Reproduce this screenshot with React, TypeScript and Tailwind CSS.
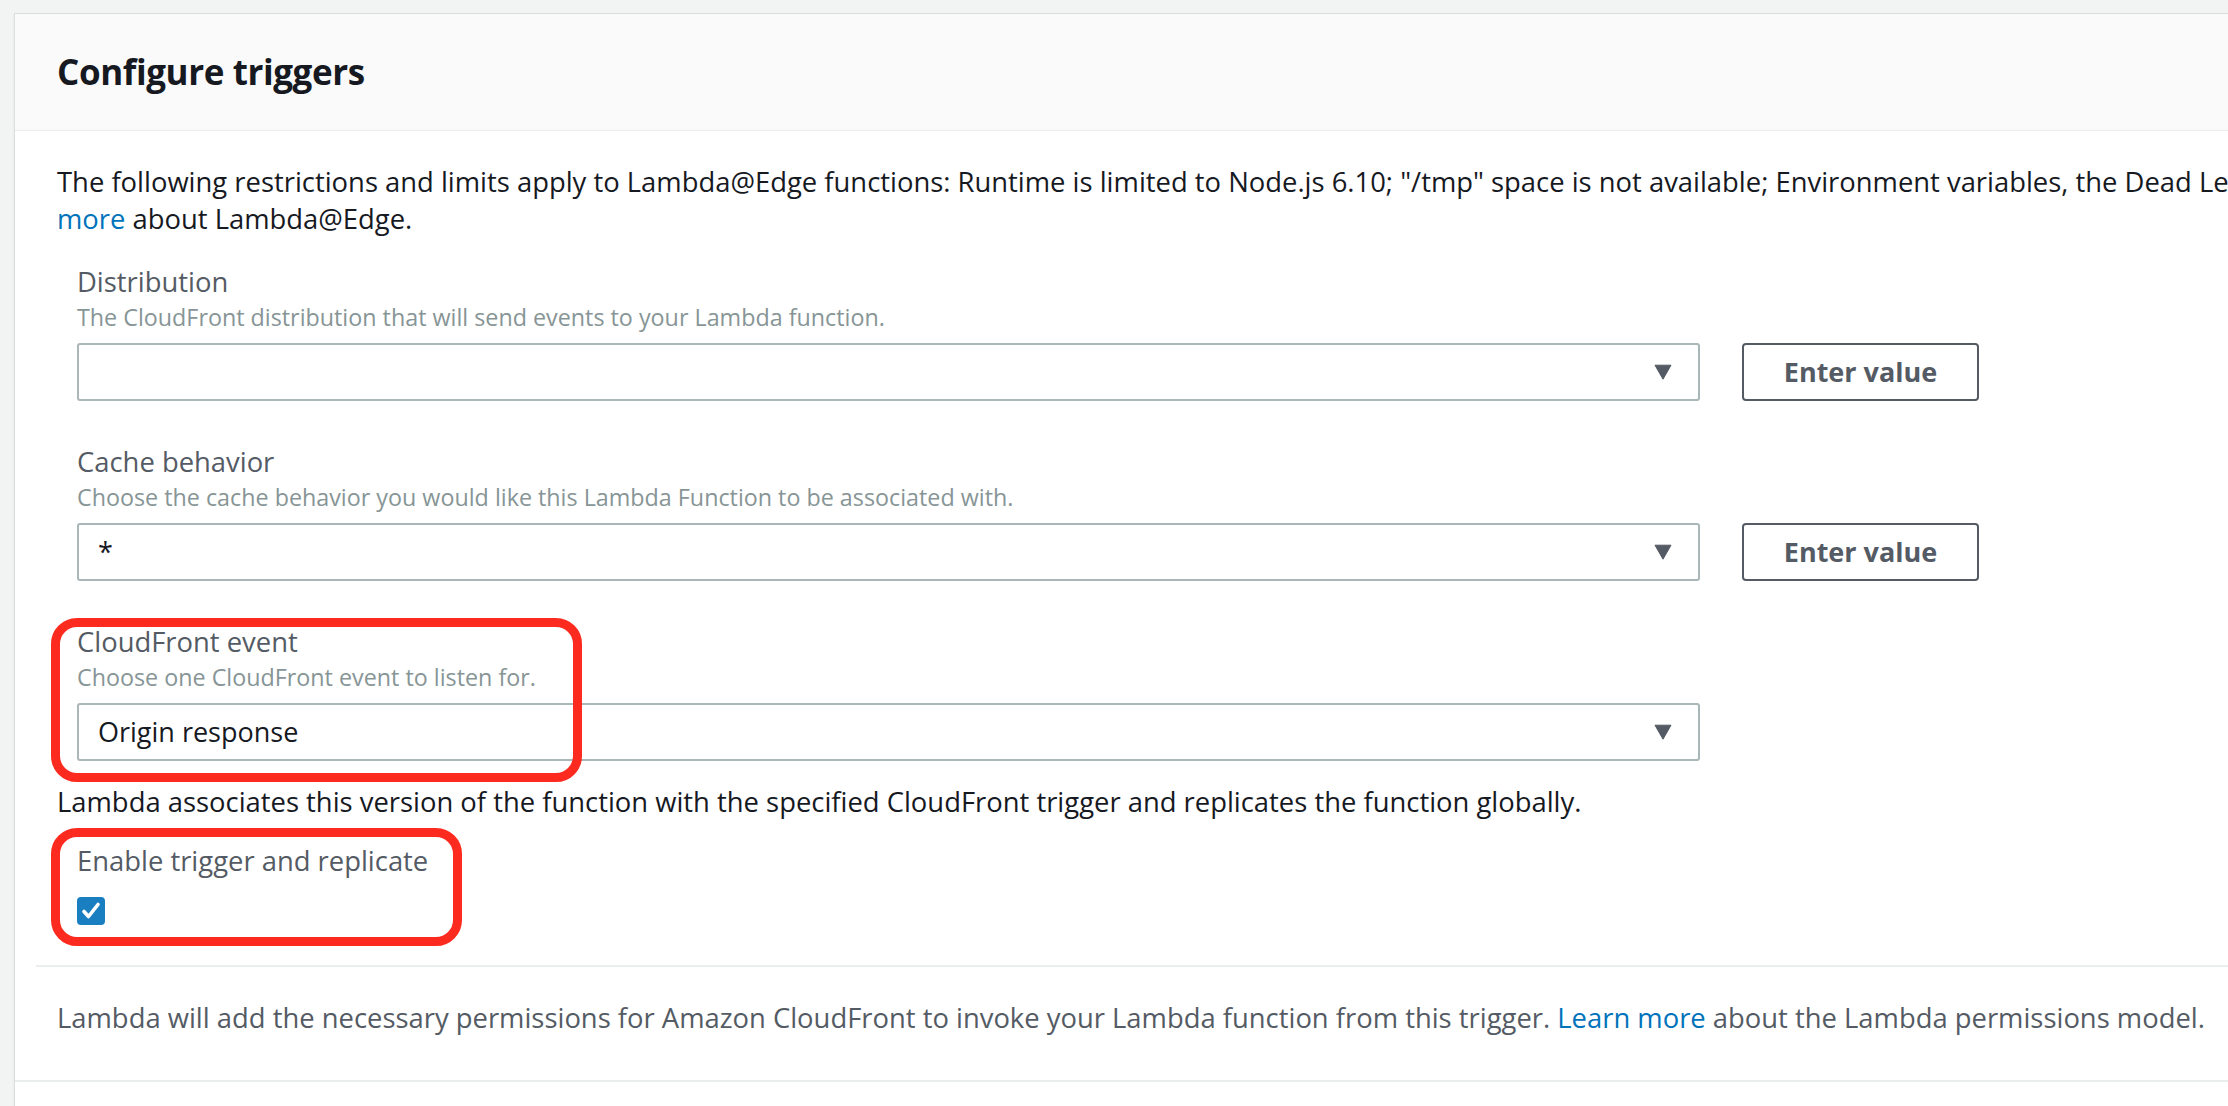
import type { ReactNode } from "react";

function Caret() {
  return (
    <svg width="18" height="16" viewBox="0 0 18 16" className="shrink-0">
      <path d="M1 1.2h16L9 15.2z" fill="#545b64" stroke="#545b64" strokeWidth="1" strokeLinejoin="round" />
    </svg>
  );
}

function SelectBox({ value }: { value?: string }) {
  return (
    <div className="flex h-[58px] w-[1623px] shrink-0 items-center justify-between rounded-[3px] border-2 border-[#aab7b8] bg-white pl-[19px] pr-[26px]">
      <span className="text-[27px] text-[#16191f]">{value}</span>
      <Caret />
    </div>
  );
}

function EnterValue() {
  return (
    <button className="h-[58px] w-[237px] rounded-[4px] border-2 border-[#545b64] bg-white text-[27px] font-bold text-[#545b64]">
      Enter value
    </button>
  );
}

function Field({ label, hint, children }: { label: string; hint: string; children: ReactNode }) {
  return (
    <div>
      <div className="text-[27.4px] leading-[34px] text-[#545b64]">{label}</div>
      <div className="mt-[3px] text-[23.3px] leading-[30px] text-[#879596]">{hint}</div>
      <div className="mt-[11px] flex items-center gap-[42px]">{children}</div>
    </div>
  );
}

// red annotation frame drawn on top of the screenshot
function Mark({ className }: { className: string }) {
  return (
    <div
      className={`pointer-events-none absolute z-10 rounded-[26px] border-[9px] border-[#fc2a1f] ${className}`}
    />
  );
}

export default function App() {
  return (
    <div className="min-h-screen overflow-hidden bg-[#f2f3f3] pl-[14px] pt-[13px] font-['Open_Sans',sans-serif]">
      <div className="w-[2300px] border border-[#d9dede] bg-white shadow-[0_1px_2px_rgba(0,0,0,0.08)]">
        <div className="flex h-[117px] items-center border-b border-[#eaeded] bg-[#fafafa] pl-[42px]">
          <h2 className="text-[35px] font-bold tracking-[-0.4px] text-[#16191f]">Configure triggers</h2>
        </div>

        <div className="pl-[42px] pt-[32px]">
          <p className="whitespace-nowrap text-[27.4px] leading-[37px] text-[#16191f]">
            The following restrictions and limits apply to Lambda@Edge functions: Runtime is limited to Node.js 6.10;
            "/tmp" space is not available; Environment variables, the Dead Letter Queue, and Amazon VPC cannot be
            used. <span className="text-[#0073bb]">Learn</span>
            <br />
            <span className="text-[#0073bb]">more</span> about Lambda@Edge.
          </p>

          <div className="ml-[20px] mt-[28px] flex flex-col gap-[44px]">
            <Field label="Distribution" hint="The CloudFront distribution that will send events to your Lambda function.">
              <SelectBox />
              <EnterValue />
            </Field>
            <Field
              label="Cache behavior"
              hint="Choose the cache behavior you would like this Lambda Function to be associated with."
            >
              <SelectBox value="*" />
              <EnterValue />
            </Field>
            <div className="relative">
              <Mark className="left-[-26px] top-[-7px] h-[164px] w-[531px]" />
              <Field label="CloudFront event" hint="Choose one CloudFront event to listen for.">
                <SelectBox value="Origin response" />
              </Field>
            </div>
          </div>

          <p className="mt-[22px] text-[27.4px] leading-[37px] text-[#16191f]">
            Lambda associates this version of the function with the specified CloudFront trigger and replicates the
            function globally.
          </p>

          <div className="relative ml-[20px] mt-[24px] w-fit">
            <Mark className="left-[-26px] top-[-16px] h-[118px] w-[411px]" />
            <div className="text-[27.4px] leading-[34px] text-[#545b64]">Enable trigger and replicate</div>
            <div className="mt-[19px] flex h-[28px] w-[28px] items-center justify-center rounded-[4px] bg-[#1a7fc0]">
              <svg width="22" height="22" viewBox="0 0 22 22">
                <path d="M4 11.5l4.5 5L18 4.5" fill="none" stroke="#fff" strokeWidth="3.6" strokeLinecap="round" strokeLinejoin="round" />
              </svg>
            </div>
          </div>
        </div>

        <div className="ml-[21px] mt-[40px] h-[2px] bg-[#eaeded]" />

        <p className="pb-[44px] pl-[42px] pt-[32px] text-[27.4px] leading-[37px] text-[#545b64]">
          Lambda will add the necessary permissions for Amazon CloudFront to invoke your Lambda function from this
          trigger. <span className="text-[#0073bb]">Learn more</span> about the Lambda permissions model.
        </p>

        <div className="h-[80px] border-t-2 border-[#eaeded]" />
      </div>
    </div>
  );
}
